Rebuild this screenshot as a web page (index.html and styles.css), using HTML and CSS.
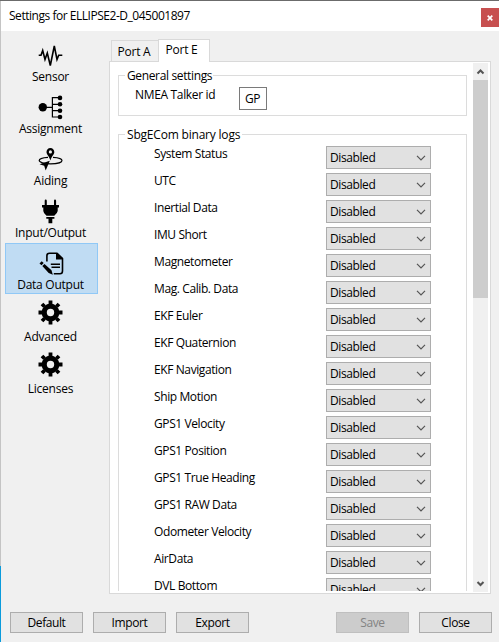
FILE: index.html
```html
<!DOCTYPE html>
<html lang="en">
<head>
<meta charset="utf-8">
<title>Settings for ELLIPSE2-D_045001897</title>
<link rel="stylesheet" href="styles.css">
</head>
<body>
<div class="window">
  <header class="titlebar">
    <h1 class="title">Settings for ELLIPSE2-D_045001897</h1>
    <button class="close" aria-label="Close window"><svg width="6" height="6" viewBox="0 0 6 6"><path d="M.7 .7L5.3 5.3M5.3 .7L.7 5.3"/></svg></button>
  </header>
  <main class="main">
    <nav class="nav">
      <a class="item"><svg class="icon" viewBox="0 0 26 26"><path class="line" d="M.7 12.3H3L4.7 7.5L7 16.5L9.3 10L12.3 22.5L16.3 3L19 16.5L20.7 12.3H24.3"/></svg><span>Sensor</span></a>
      <a class="item"><svg class="icon" viewBox="0 0 26 26"><path class="thin" d="M5 12.4H14.4M22 2.7H14.4V22H22M14.4 9.3H22M14.4 15.7H22"/><circle cx="4.8" cy="12.3" r="4.2"/><circle cx="22" cy="2.9" r="2.3"/><circle cx="22" cy="9.3" r="2.3"/><circle cx="22" cy="15.7" r="2.3"/><circle cx="22" cy="22" r="2.3"/></svg><span>Assignment</span></a>
      <a class="item"><svg class="icon" viewBox="0 0 26 26"><path class="thin" d="M10 10.4C4.500 10.700 1.200 12 1.200 13.600C1.200 15.200 6 16.900 12.600 16.900S24 15.400 24 13.600C24 12 20.500 10.700 15 10.400"/><path fill-rule="evenodd" d="M12.400 1C10 1 8.500 2.800 8.500 4.900C8.500 7.500 11.200 9 12.400 13.500C13.600 9 16.300 7.500 16.300 4.900C16.300 2.800 14.700 1 12.400 1ZM12.400 3.300A1.600 1.600 0 1 1 12.400 6.500A1.600 1.600 0 0 1 12.400 3.300Z"/><path d="M11.800 13.800L7.700 23.500L6.200 18.800L1.500 17.200Z"/></svg><span>Aiding</span></a>
      <a class="item"><svg class="icon" viewBox="0 0 26 26"><path d="M6.700 6V1.700Q6.700 .6 7.700 .6T8.800 1.700V6H16V1.700Q16 .6 17 .6T18.100 1.700V6H21V8.600H19.700V12Q19.300 14.500 16.300 16.700H8.500Q5.500 14.500 5.300 12V8.600H4V6ZM8.300 18H16.400V19.800H14.300V24.300H10.500V19.800H8.300Z"/></svg><span>Input/Output</span></a>
      <a class="item selected"><svg class="icon" viewBox="0 0 26 26"><path class="line" d="M8.900 10.500V4.800Q8.900 2.300 11.500 2.300H19L24.500 7.600V20Q24.500 22.700 22 22.700H15.800M12.800 13.300H22M13.500 16.200H22"/><path d="M18 2V8.400H24.800V7L19.500 2ZM1.500 12.400L3.700 10.300L5.700 12.100L3.500 14.300ZM4.300 15L6.500 12.900L13.500 19.300L14.800 23.700L10.700 22Z"/></svg><span>Data Output</span></a>
      <a class="item"><svg class="icon gear" viewBox="0 0 26 26"><use href="#gear"/></svg><span>Advanced</span></a>
      <a class="item"><svg class="icon gear" viewBox="0 0 26 26"><g id="gear"><circle class="ring" cx="12.500" cy="12.500" r="6.300"/><path class="teeth" d="M12.500 .5V4M12.500 21V24.500M.5 12.500H4M21 12.500H24.500M4 4L6.500 6.500M18.500 18.500L21 21M21 4L18.500 6.500M6.500 18.500L4 21"/></g></svg><span>Licenses</span></a>
    </nav>
    <section class="content">
      <div class="tabs"><div class="tab">Port A</div><div class="tab active">Port E</div></div>
      <div class="panel">
        <div class="view">
          <section class="group general">
            <h2 class="legend l-general">General settings</h2>
            <label class="talker">NMEA Talker id</label><div class="input">GP</div>
          </section>
          <section class="group logs">
            <h2 class="legend l-logs">SbgECom binary logs</h2>
            <div class="rows" id="rows"></div>
          </section>
        </div>
        <div class="scrollbar">
          <svg class="arrow" viewBox="0 0 15 17"><path d="M4.500 10.500L7.500 7.500L10.500 10.500"/></svg>
          <div class="thumb"></div>
          <svg class="arrow down" viewBox="0 0 15 17"><path d="M4.500 7L7.500 10L10.500 7"/></svg>
        </div>
      </div>
    </section>
  </main>
  <footer class="footer">
    <button class="btn">Default</button><button class="btn">Import</button><button class="btn">Export</button>
    <button class="btn save" disabled>Save</button><button class="btn primary">Close</button>
  </footer>
</div>
<script src="script.js"></script>
</body>
</html>
```
FILE: script.js
```js
const logs = ["System Status", "UTC", "Inertial Data", "IMU Short", "Magnetometer", "Mag. Calib. Data",
  "EKF Euler", "EKF Quaternion", "EKF Navigation", "Ship Motion", "GPS1 Velocity", "GPS1 Position",
  "GPS1 True Heading", "GPS1 RAW Data", "Odometer Velocity", "AirData", "DVL Bottom"];
document.getElementById("rows").innerHTML = logs.map(name =>
  `<div class="row"><span class="name">${name}</span><div class="combo"><span>Disabled</span><svg class="chev" viewBox="0 0 10 6"><path d="M1 .8L5 4.800L9 .8"/></svg></div></div>`
).join("");
```
FILE: styles.css
```css
* { box-sizing: border-box; }
body {
  margin: 0;
  font: 12px/16px "Open Sans", "Noto Sans", sans-serif;
  letter-spacing: -0.4px;
  color: #000;
}
.window {
  width: 499px;
  height: 642px;
  overflow: hidden;
  display: flex;
  flex-direction: column;
  background: linear-gradient(#c4c4c4 0 565px, #0a9bdc 565px) 0 0 / 1px 100% no-repeat, #f0f0f0;
  border-top: 1px solid #6b6b6b;
}
.titlebar {
  height: 30px;
  margin-left: 1px;
  padding-left: 8px;
  background: #fff;
  display: flex;
  justify-content: space-between;
}
.title { margin: 7px 0 0; font-size: 12px; font-weight: 400; white-space: nowrap; letter-spacing: -0.47px; }
.close {
  width: 18px;
  height: 19px;
  margin-top: 7px;
  padding: 0;
  border: 0;
  background: #c75050;
  display: flex;
  align-items: center;
  justify-content: center;
}
.close path { stroke: #fff; stroke-width: 1.7; }
.main { display: flex; height: 563px; }
.nav { width: 93px; margin: 4px 11px 0 5px; letter-spacing: -0.25px; }
.item {
  height: 51px;
  margin-bottom: 1px;
  display: flex;
  flex-direction: column;
  align-items: center;
  border: 1px solid transparent;
  padding: 7px 2px 0 0;
}
.item.selected { background: #c0dcf3; border-color: #90c8f6; }
.item span { white-space: nowrap; }
.icon { width: 26px; height: 26px; flex: none; overflow: visible; }
.icon.gear { margin-top: -3px; margin-bottom: 3px; }
.line { fill: none; stroke: #000; stroke-width: 1.6; }
.thin { fill: none; stroke: #000; stroke-width: 1.2; }
.ring { fill: none; stroke: #000; stroke-width: 5.2; }
.teeth { stroke: #000; stroke-width: 3.8; }
.content { width: 382px; padding-top: 8px; }
.tabs { display: flex; align-items: flex-end; height: 23px; margin: 0 0 -1px 2px; position: relative; letter-spacing: -0.25px; }
.tab { width: 47px; height: 21px; border: 1px solid #d9d9d9; border-bottom: 0; padding: 3px 2px 0 0; text-align: center; margin-bottom: 1px; border-right: 0; }
.tab.active { width: 52px; height: 23px; margin-bottom: 0; border-right: 1px solid #d9d9d9; background: #fff; padding: 2px 5px 0 0; }
.panel { height: 533px; border: 1px solid #d9d9d9; background: #fff; display: flex; padding: 1px 1px 2px 0; }
.view { width: 363px; height: 528px; padding: 12px 0 0 8px; overflow: hidden; }
.group { width: 349px; border: 1px solid #dcdcdc; }
.general { height: 41px; display: flex; flex-wrap: wrap; align-content: flex-start; }
.legend {
  margin: -8px 0 0 6px;
  padding: 0 2px;
  height: 16px;
  font-size: 12px;
  font-weight: 400;
  background: #fff;
  white-space: nowrap;
}
.l-general { width: 88px; margin-right: 240px; letter-spacing: -0.36px; }
.l-logs { width: 117px; letter-spacing: -0.2px; }
.talker { width: 104px; margin-left: 16px; margin-top: 3px; height: 16px; white-space: nowrap; letter-spacing: -0.33px; }
.input { width: 28px; height: 23px; margin-top: 3px; border: 1px solid #7a7a7a; padding: 3px 0 0 5px; }
.logs { margin-top: 18px; height: 500px; }
.rows { padding-top: 3px; }
.row { height: 27px; display: flex; }
.name { width: 172px; margin-left: 35px; white-space: nowrap; }
.combo {
  width: 105px;
  height: 23px;
  border: 1px solid #adadad;
  background: #e1e1e1;
  display: flex;
  align-items: center;
  justify-content: space-between;
  padding: 1px 4px 0 3px;
}
.chev { width: 10px; height: 6px; }
.chev path { fill: none; stroke: #555; stroke-width: 1.2; }
.scrollbar { width: 15px; height: 529px; background: #f0f0f0; display: flex; flex-direction: column; }
.arrow { width: 15px; height: 17px; flex: none; }
.arrow path { fill: none; stroke: #555; stroke-width: 2; }
.arrow.down { margin-top: auto; }
.thumb { height: 218px; background: #cdcdcd; }
.footer { display: flex; gap: 10px; padding: 18px 7px 0 10px; }
.btn {
  width: 73px;
  height: 21px;
  padding: 0;
  border: 1px solid #adadad;
  background: #e1e1e1;
  color: #000;
  font: inherit;
  line-height: 18px;
  letter-spacing: inherit;
}
.btn.save { margin-left: auto; background: #ccc; border-color: #bfbfbf; color: #838383; }
```
